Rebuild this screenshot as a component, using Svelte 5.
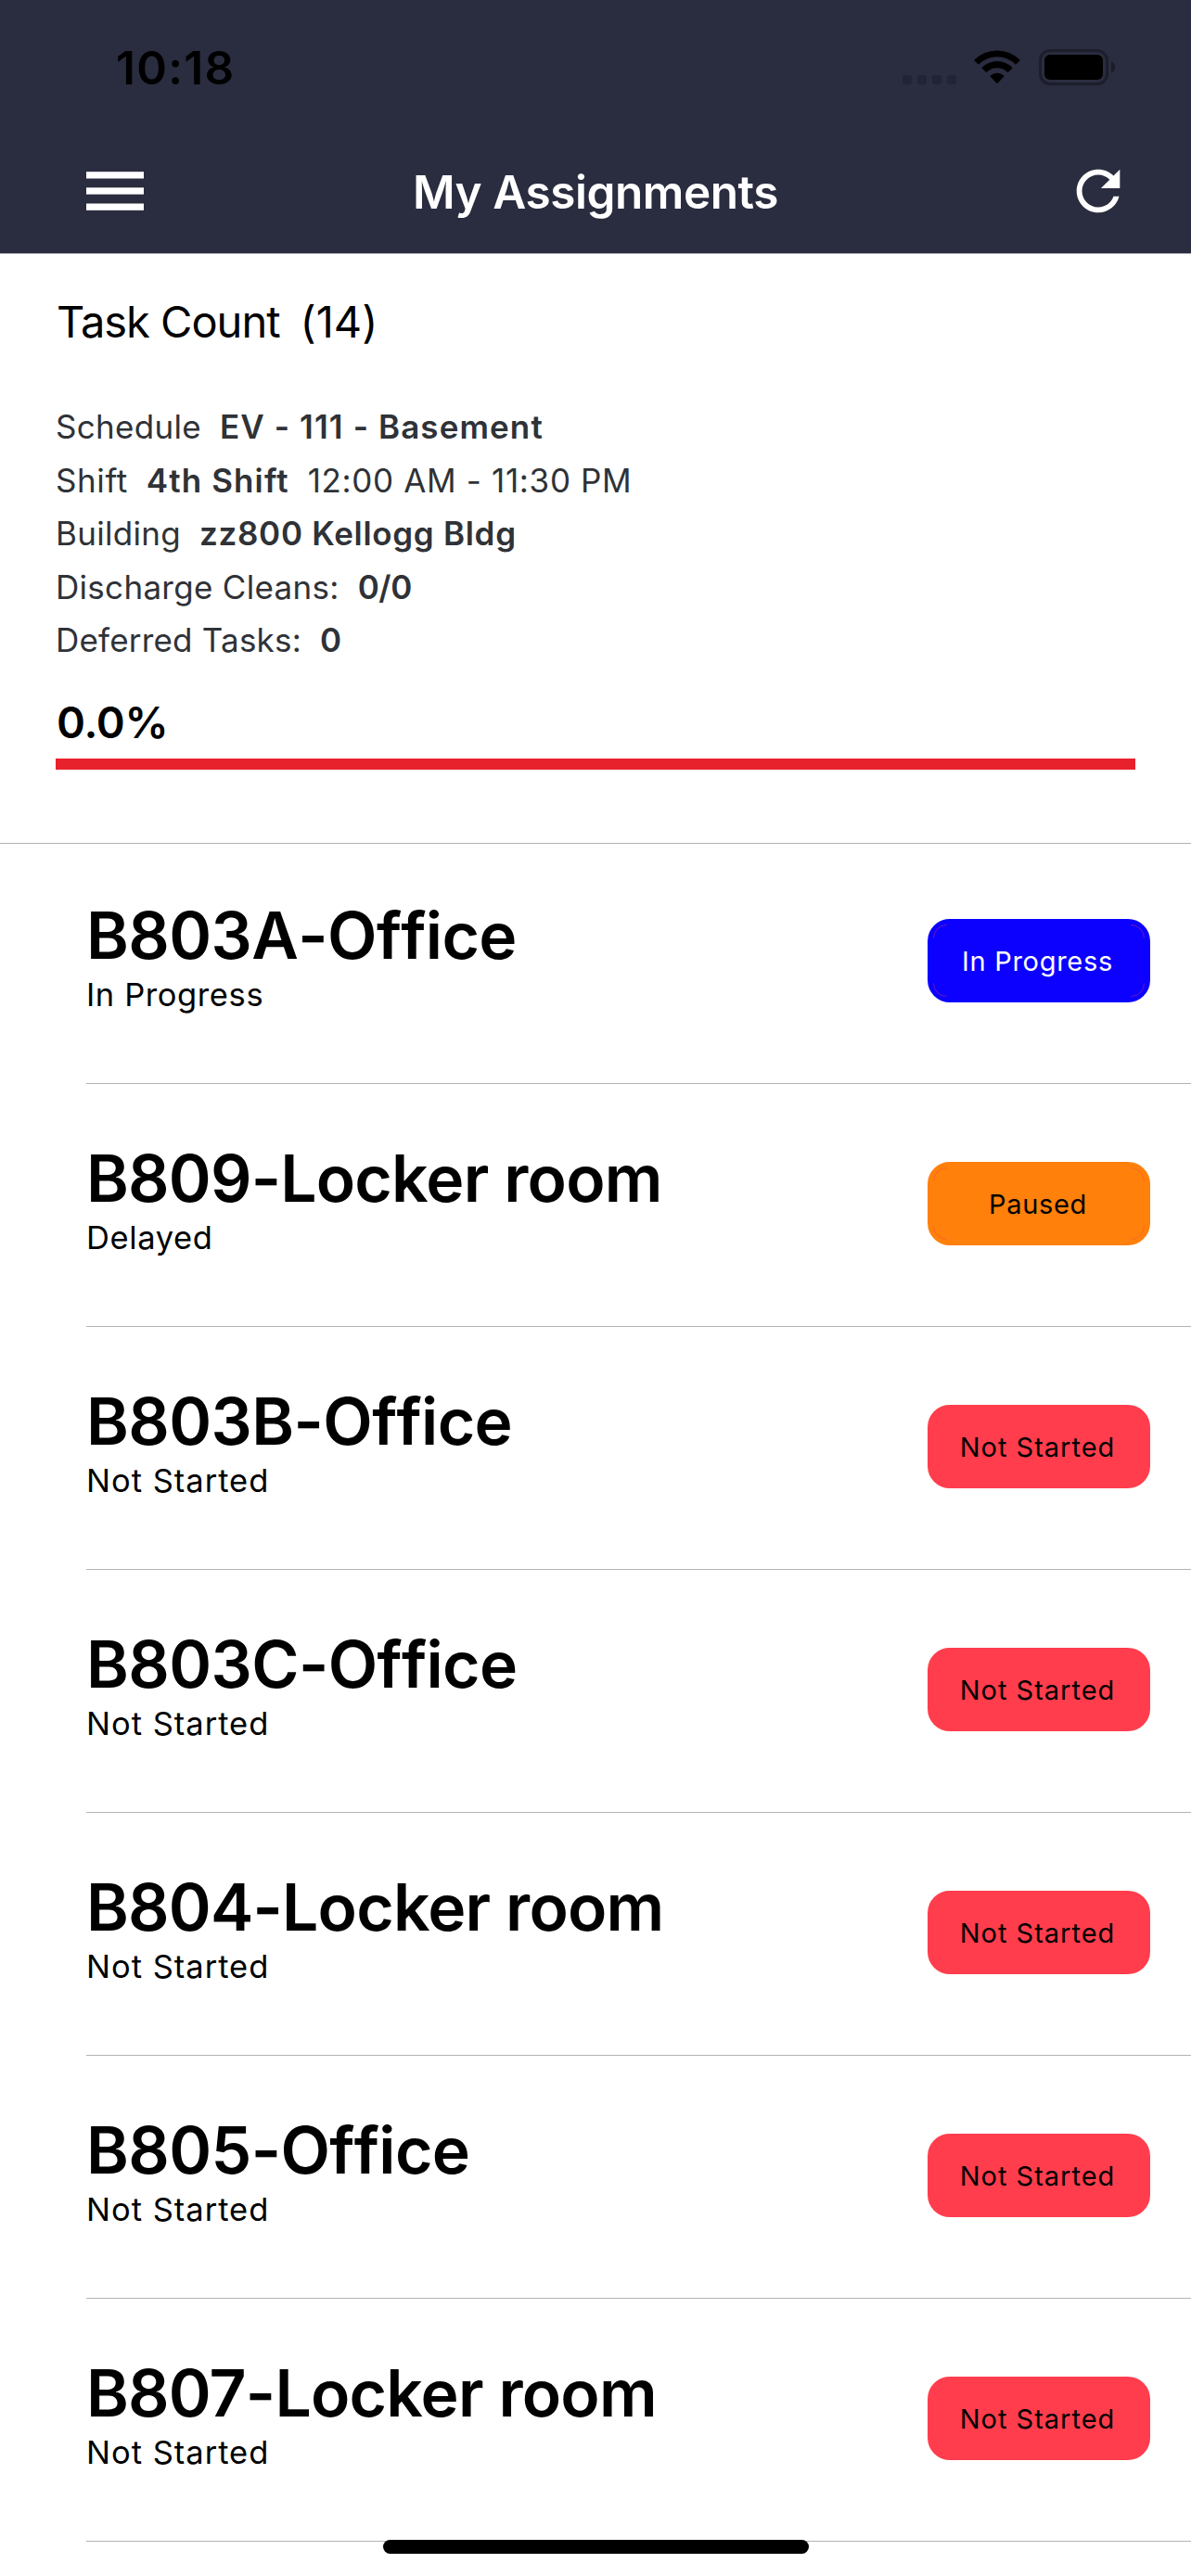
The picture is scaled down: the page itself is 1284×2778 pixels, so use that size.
<script lang="ts">
  type Tone = 'active' | 'paused' | 'pending';
  interface Task { room: string; status: string; action: string; tone: Tone }

  const tasks: Task[] = [
    { room: 'B803A-Office', status: 'In Progress', action: 'In Progress', tone: 'active' },
    { room: 'B809-Locker room', status: 'Delayed', action: 'Paused', tone: 'paused' },
    { room: 'B803B-Office', status: 'Not Started', action: 'Not Started', tone: 'pending' },
    { room: 'B803C-Office', status: 'Not Started', action: 'Not Started', tone: 'pending' },
    { room: 'B804-Locker room', status: 'Not Started', action: 'Not Started', tone: 'pending' },
    { room: 'B805-Office', status: 'Not Started', action: 'Not Started', tone: 'pending' },
    { room: 'B807-Locker room', status: 'Not Started', action: 'Not Started', tone: 'pending' }
  ];

  const details = [
    { label: 'Schedule', value: 'EV - 111 - Basement', note: '' },
    { label: 'Shift', value: '4th Shift', note: '12:00 AM - 11:30 PM' },
    { label: 'Building', value: 'zz800 Kellogg Bldg', note: '' },
    { label: 'Discharge Cleans:', value: '0/0', note: '' },
    { label: 'Deferred Tasks:', value: '0', note: '' }
  ];
</script>

<div class="screen">
  <header>
    <div class="status-bar">
      <span class="time">10:18</span>
      <div class="indicators">
        <svg class="signal" viewBox="0 0 58 10" fill="#222334">
          <rect width="10" height="10" rx="3" />
          <rect x="16" width="10" height="10" rx="3" />
          <rect x="32" width="10" height="10" rx="3" />
          <rect x="48" width="10" height="10" rx="3" />
        </svg>
        <svg class="wifi" viewBox="0 0 50 38">
          <path d="M.7 11.2a35 35 0 0 1 48.6 0q.7.7 0 1.4l-3.6 3.5q-.6.6-1.3 0a28 28 0 0 0-38.8 0q-.7.6-1.3 0L.7 12.6q-.7-.7 0-1.4z" />
          <path d="M9 19.6a23 23 0 0 1 32 0q.7.7 0 1.3l-3.7 3.7q-.6.6-1.3 0a16 16 0 0 0-22 0q-.7.6-1.3 0L9 20.9q-.7-.6 0-1.3z" />
          <path d="M17.8 28.4a11 11 0 0 1 14.4 0q.7.6 0 1.3l-6.5 6.9q-.7.7-1.4 0l-6.5-6.9q-.7-.7 0-1.3z" />
        </svg>
        <svg class="battery" viewBox="0 0 82 39">
          <rect x="1.5" y="1.5" width="72" height="36" rx="10.5" fill="none" stroke="#1d1e2b" stroke-width="3" />
          <rect x="6" y="6" width="63" height="27" rx="6" />
          <path d="M78 13.5q4 1.8 4 6t-4 6z" fill="#1a1b27" />
        </svg>
      </div>
    </div>
    <nav>
      <button class="menu" aria-label="Menu">
        <svg viewBox="0 0 62 42" fill="#fff">
          <rect y=".2" width="62" height="7.3" />
          <rect y="17.3" width="62" height="7.3" />
          <rect y="34.5" width="62" height="7.3" />
        </svg>
      </button>
      <h1>My Assignments</h1>
      <button class="refresh" aria-label="Refresh">
        <svg viewBox="0 0 24 24" fill="#fff">
          <path d="M17.65 6.35C16.2 4.9 14.21 4 12 4c-4.42 0-7.99 3.58-7.99 8s3.57 8 7.99 8c3.73 0 6.84-2.55 7.73-6h-2.08c-.82 2.33-3.04 4-5.65 4-3.31 0-6-2.69-6-6s2.69-6 6-6c1.66 0 3.14.69 4.22 1.78L13 11h7V4l-2.35 2.35z" />
        </svg>
      </button>
    </nav>
  </header>

  <section class="summary">
    <h2><span class="caption">Task Count</span><span>(14)</span></h2>
    <div class="details">
      {#each details as d}
        <p><span>{d.label}</span><b>{d.value}</b>{#if d.note}<span class="note">{d.note}</span>{/if}</p>
      {/each}
    </div>
    <div class="percent">0.0%</div>
    <div class="progress"></div>
  </section>

  <ul>
    {#each tasks as task}
      <li>
        <div class="info">
          <h3 class:office={task.room.endsWith('Office')}>{task.room}</h3>
          <p class={task.tone}>{task.status}</p>
        </div>
        <button class="badge {task.tone}">
          <svg viewBox="0 0 240 90" fill="none" stroke="#ff3d4d" stroke-opacity=".4">
            <path d="M6.5 20.5a14 14 0 0 1 14-14M219.5 6.5a14 14 0 0 1 14 14M233.5 69.5a14 14 0 0 1-14 14M20.5 83.5a14 14 0 0 1-14-14" />
          </svg>
          <span>{task.action}</span>
        </button>
      </li>
    {/each}
  </ul>
  <div class="home-indicator"></div>
</div>

<style>
  :global(body) { margin: 0; background: #fff; }
  .screen {
    position: relative;
    width: 1284px;
    height: 2778px;
    overflow: hidden;
    background: #fff;
    color: #000;
    font-family: Inter, "Liberation Sans", sans-serif;
    font-variant-ligatures: none;
  }
  h1, h2, h3, p, ul { margin: 0; padding: 0; font-weight: 400; }
  button { border: 0; padding: 0; background: none; font: inherit; }
  svg { display: block; }

  header { height: 274px; background: #2a2c3f; border-bottom: 1px solid #b4b5bb; box-sizing: border-box; }
  .status-bar {
    display: flex;
    justify-content: space-between;
    height: 141px;
    padding: 0 82px 0 125px;
    box-sizing: border-box;
  }
  .time { padding-top: 43px; font-size: 49.5px; line-height: 60px; font-weight: 600; letter-spacing: 1.3px; }
  .indicators { display: flex; align-items: flex-end; height: 92px; }
  .signal { width: 58px; height: 10px; margin: 0 19px 1px 0; }
  .wifi { width: 50px; height: 38px; margin: 0 20px 1px 0; }
  .battery { width: 82px; height: 39px; }

  nav { display: grid; grid-template-columns: 200px 1fr 200px; align-items: center; height: 130px; }
  .menu { width: 62px; margin-left: 93px; }
  .menu svg { width: 62px; height: 42px; }
  h1 { color: #fff; text-align: center; font-size: 49.5px; line-height: 60px; font-weight: 600; letter-spacing: -0.45px; padding-top: 1px; }
  .refresh { width: 70px; height: 70px; margin-left: 65px; }

  .summary { height: 636px; padding: 43px 60px 0; box-sizing: border-box; border-bottom: 1px solid #b3b3b3; }
  h2 { display: flex; gap: 22px; padding-left: 1px; font-size: 47px; line-height: 60px; }
  .caption { letter-spacing: -1px; }
  .details { margin-top: 55px; color: #2f3237; font-size: 35px; line-height: 57.6px; letter-spacing: 0.3px; }
  .details p { display: flex; gap: 20px; white-space: nowrap; }
  .details p:nth-child(2) { letter-spacing: 0.6px; }
  .details p:nth-child(5) { letter-spacing: 0.2px; }
  .details b { font-weight: 600; letter-spacing: 1.1px; }
  .details p:nth-child(3) b { letter-spacing: 0.7px; }
  .details p:nth-child(n + 4) b { letter-spacing: -0.4px; }
  .details .note { letter-spacing: 0.65px; }
  .percent { margin-top: 29px; padding-left: 1px; font-size: 47px; line-height: 60px; font-weight: 570; letter-spacing: -0.3px; }
  .progress { margin-top: 9px; height: 12px; background: #e8222d; }

  ul { list-style: none; }
  li {
    display: flex;
    justify-content: space-between;
    height: 262px;
    margin-left: 93px;
    padding-right: 44px;
    box-sizing: border-box;
    border-bottom: 1px solid #b3b3b3;
  }
  li:first-child { margin-top: -3px; }
  .info { padding-top: 60px; }
  h3 { font-size: 69.6px; line-height: 84px; font-weight: 600; letter-spacing: -0.8px; }
  h3.office { font-kerning: none; letter-spacing: -0.6px; }
  .info p { margin-top: 2px; background: none; color: #000; font-size: 34.5px; line-height: 40px; letter-spacing: 0.6px; }
  .info p.pending { letter-spacing: 1px; }
  .badge {
    display: grid;
    place-items: center;
    width: 240px;
    height: 90px;
    margin-top: 84px;
    border-radius: 24px;
    font-size: 29px;
    letter-spacing: 0.7px;
    color: #000;
  }
  .badge > * { grid-area: 1 / 1; }
  .badge svg { width: 240px; height: 90px; }
  .badge span { padding-right: 3px; }
  .badge.active { background: #0c00ff; color: #fff; }
  .badge.paused { background: #ff800b; }
  .badge.paused span { padding-right: 2px; }
  .badge.pending { background: #ff3d4d; letter-spacing: 1px; }

  .home-indicator {
    position: absolute;
    left: 413px;
    top: 2739px;
    width: 459px;
    height: 15px;
    border-radius: 8px;
    background: #000;
  }
</style>
